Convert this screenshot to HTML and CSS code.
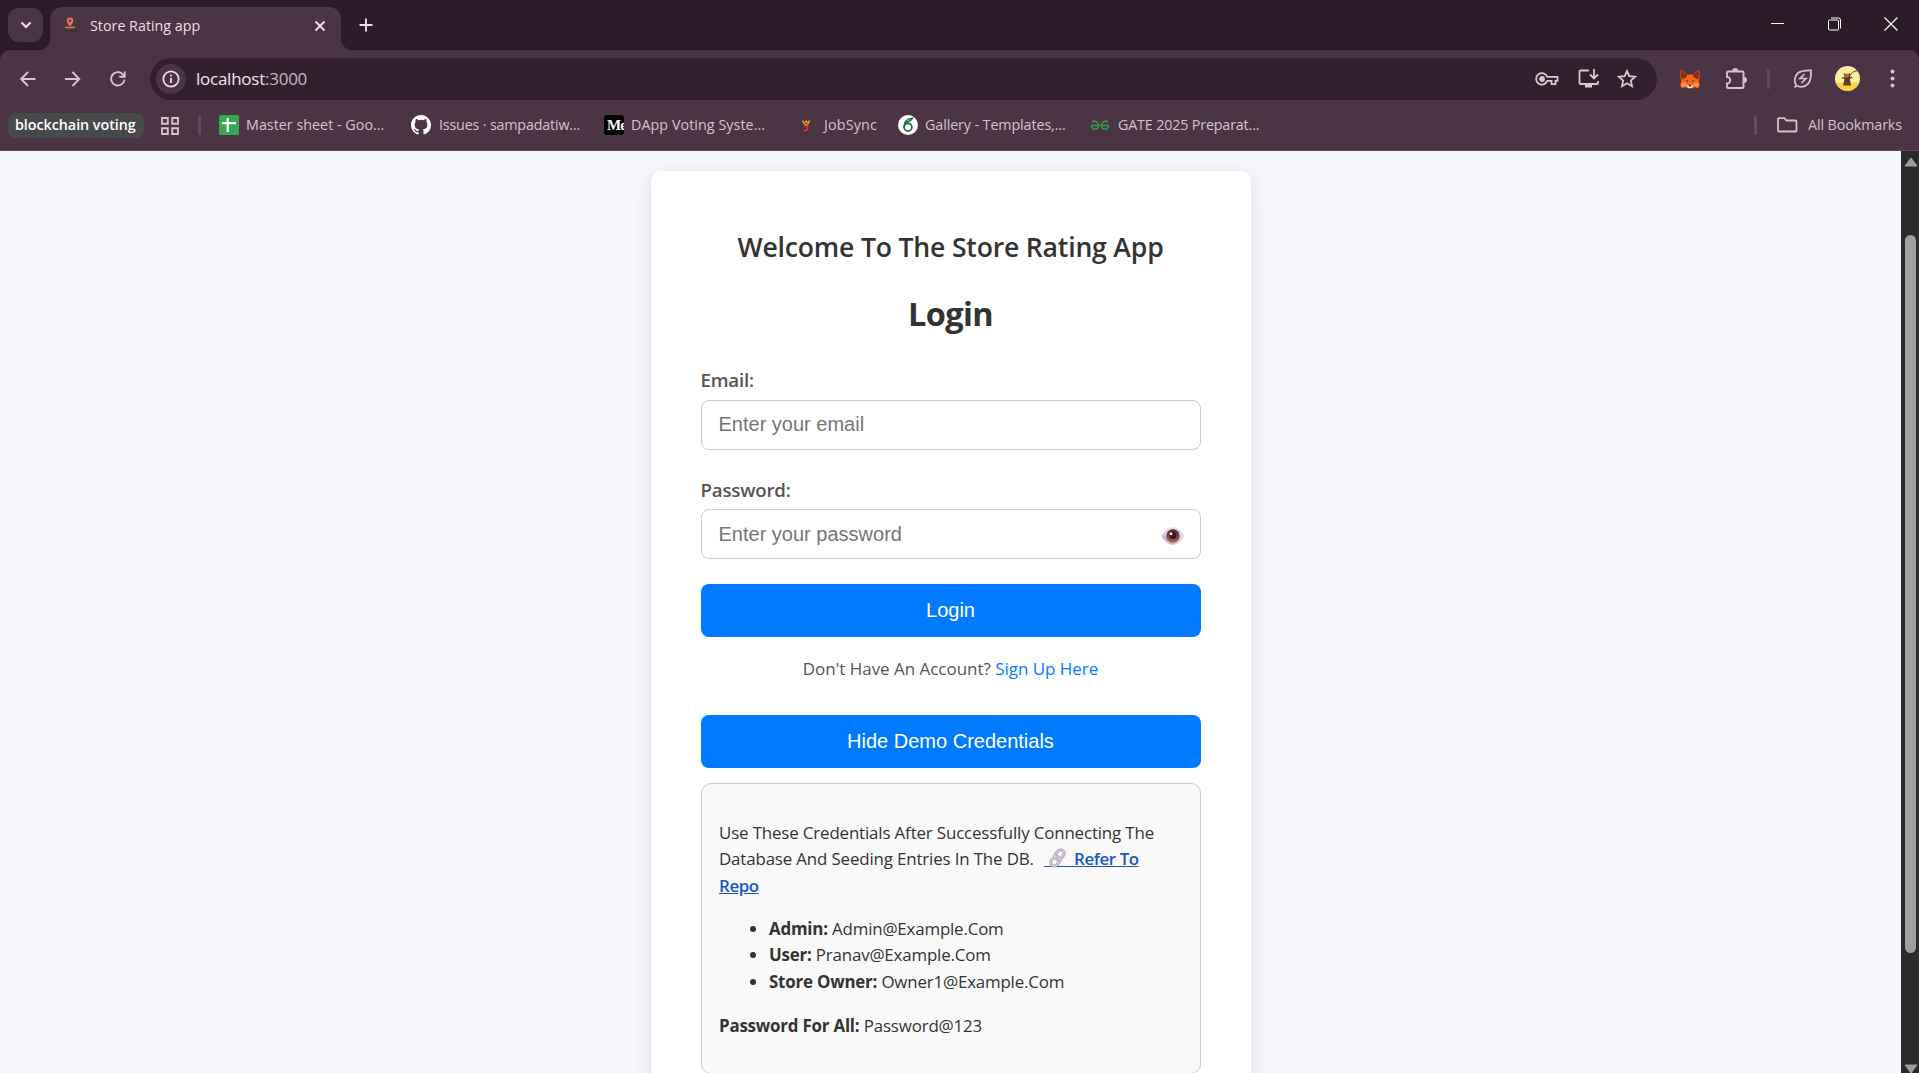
FILE: index.html
```html
<!DOCTYPE html>
<html lang="en">
<head>
<meta charset="utf-8">
<title>Store Rating app</title>
<link rel="stylesheet" href="styles.css">
</head>
<body>
<div class="browser">
  <div class="tabstrip">
    <div class="tab-search"><svg width="12" height="8" viewBox="0 0 12 8"><path d="M1.500 1.500 6 6l4.500-4.500" fill="none" stroke="currentColor" stroke-width="2.200"/></svg></div>
    <div class="tab">
      <svg class="favicon" width="16" height="16" viewBox="0 0 16 16"><path d="M8 9.500C6 7 4.800 5.500 4.800 3.700a3.200 3.200 0 0 1 6.400 0C11.200 5.500 10 7 8 9.500z" fill="#f0705c"/><circle cx="8" cy="3.700" r="1.300" fill="#4b3545"/><path d="M3 10.500h10" stroke="#c98a2c" stroke-width="1.600"/><path d="M1 13.800h14" stroke="#3a3138" stroke-width="2"/></svg>
      <span class="tab-title">Store Rating app</span>
      <svg class="tab-close" width="12" height="12" viewBox="0 0 12 12"><path d="m1.500 1.500 9 9m0-9-9 9" stroke="currentColor" stroke-width="1.900"/></svg>
    </div>
    <svg class="new-tab" width="14" height="14" viewBox="0 0 14 14"><path d="M7 .5v13M.5 7h13" stroke="currentColor" stroke-width="1.900"/></svg>
    <div class="window-buttons">
      <svg width="14" height="14" viewBox="0 0 14 14"><path d="M0 6.500h13" stroke="currentColor"/></svg>
      <svg width="14" height="14" viewBox="0 0 14 14" fill="none" stroke="currentColor"><rect x=".5" y="3" width="10" height="10" rx="1"/><path d="M3 1h7.500a2 2 0 0 1 2 2v8.500"/></svg>
      <svg width="14" height="14" viewBox="0 0 14 14"><path d="m.5.5 13 13m0-13-13 13" stroke="currentColor" stroke-width="1.200"/></svg>
    </div>
  </div>

  <div class="chrome">
    <div class="toolbar">
      <svg class="nav" width="16" height="16" viewBox="0 0 16 16"><path d="M15.500 8H1.800M8 1 1.200 8 8 15" fill="none" stroke="currentColor" stroke-width="1.900"/></svg>
      <svg class="nav" width="16" height="16" viewBox="0 0 16 16"><path d="M0 8h13.700M7.500 1l6.800 7-6.800 7" fill="none" stroke="currentColor" stroke-width="1.900"/></svg>
      <svg class="nav" width="16" height="16" viewBox="0 0 16 16"><path d="M14.500 8.500A6.700 6.700 0 1 1 13 3.500l1.500 2M14.700.5v5.300H9.200" fill="none" stroke="currentColor" stroke-width="1.900"/></svg>
      <div class="omnibox">
        <div class="site-info"><svg width="18" height="18" viewBox="0 0 18 18"><circle cx="9" cy="9" r="7.700" fill="none" stroke="currentColor" stroke-width="1.700"/><path d="M9 8v5M9 4.700v1.900" stroke="currentColor" stroke-width="1.800"/></svg></div>
        <span class="url">localhost<i>:3000</i></span>
        <div class="omnibox-actions">
          <svg width="24" height="14" viewBox="0 0 24 14" fill="none" stroke="currentColor" stroke-width="1.800"><path d="M12.200 4.900H22.500v4H20.500v3.200h-4V8.900h-4.300a5.700 5.700 0 1 1 0-4z"/><circle cx="7" cy="7" r="2" fill="currentColor"/></svg>
          <svg width="21" height="19" viewBox="0 0 21 19" fill="none" stroke="currentColor" stroke-width="1.800"><path d="M11 1.500H2.500a1 1 0 0 0-1 1v11.500a1 1 0 0 0 1 1h16.500a1 1 0 0 0 1-1V12M16 0v9M12 5.500l4 4 4-4"/><path d="M7 17h7" stroke-width="3"/></svg>
          <svg width="20" height="19" viewBox="0 0 20 19" fill="none" stroke="currentColor" stroke-width="1.700"><path d="m10 1.800 2.300 5.300 5.900.5-4.400 3.900 1.300 5.700-5.100-3-5.100 3 1.300-5.700-4.400-3.900 5.900-.5z"/></svg>
        </div>
      </div>
      <div class="extensions">
        <svg width="20" height="20" viewBox="0 0 20 20"><path d="M.8.800 7.500 5.500h5L19.200.8l.5 6.200-1 5.200.8 4.300-1.300 2.500-3.900-.8-2 1.300H7.700l-2-1.300-3.900.8-1.300-2.500.8-4.300-1-5.200z" fill="#f5651d"/><path d="M1.200 1.500 7.300 5.800 6 8.300 2 10.500.9 7zM18.800 1.500l-6.100 4.300L14 8.300l4 2.200L19.100 7z" fill="#8a2b12"/><path d="m5.500 11 2.800.8-.6 1.300zM14.500 11l-2.800.8.6 1.300z" fill="#30394a"/><path d="M1 13.500 6 14l.5 3-4.500 1-1.300-1.500zM19 13.500l-5 .5-.5 3 4.500 1 1.300-1.500z" fill="#ff8b42"/><path d="M6.500 16h7L12 19H8z" fill="#f3e9e2"/><path d="M8.500 16h3l-.5 1.500H9z" fill="#30394a"/></svg>
        <svg width="22" height="22" viewBox="0 0 22 22"><path d="M3 3.500h14.500a1 1 0 0 1 1 1v14.500a1 1 0 0 1-1 1H3a1 1 0 0 1-1-1v-3.500a3.200 3.200 0 0 0 0-6.500V4.500a1 1 0 0 1 1-1z" fill="none" stroke="currentColor" stroke-width="1.900"/><path d="M7.300 3a3 3 0 0 1 6 0zM19 9a3 3 0 0 1 0 6z" fill="currentColor"/></svg>
        <i class="divider"></i>
        <svg width="20" height="20" viewBox="0 0 20 20" fill="none" stroke="currentColor" stroke-width="1.800"><path d="M3.500 16.500C.5 13 1.500 7 5 4c3.500-2.500 8-2.700 13-2.600.2 5 0 10-3 13.500-3 3.200-8 3.800-11.500 1.600zm0 0-2 2"/><path d="M11.500 5 7 9.500h6L8.500 14" stroke-width="1.700"/></svg>
        <svg width="25" height="25" viewBox="0 0 25 25"><defs><clipPath id="disc"><circle cx="12.500" cy="12.500" r="12.500"/></clipPath></defs><g clip-path="url(#disc)"><path d="M0 0h25v25H0z" fill="#fbeea0"/><path d="M0 16.500h25V25H0z" fill="#fcd23a"/><path d="M8 19.500 9.500 13 6.500 12.200l.3-1 3 .3L8.500 7l2 1h3l1.700-1.200-.7 4.200 2.500-.2.300 1-2.500 1.200 1.200 6.500z" fill="#6c371f"/><path d="M14.500 10.500C17 5.500 20 5 24 4.500" fill="none" stroke="#6c371f"/><circle cx="12" cy="9.500" r="1.900" fill="#a5744d"/></g></svg>
        <svg width="5" height="20" viewBox="0 0 5 20" fill="currentColor"><circle cx="2.500" cy="2.500" r="2"/><circle cx="2.500" cy="9.500" r="2"/><circle cx="2.500" cy="16.500" r="2"/></svg>
      </div>
    </div>

    <div class="bookmarks">
      <span class="group">blockchain voting</span>
      <svg class="apps" width="18" height="18" viewBox="0 0 18 18" fill="none" stroke="currentColor" stroke-width="1.900"><path d="M1 1h5.800v5.800H1zM11.200 1H17v5.800h-5.800zM1 11.200h5.800V17H1zM11.200 11.200H17V17h-5.800z"/></svg>
      <i class="divider"></i>
      <div class="bookmark sheet"><svg width="20" height="20" viewBox="0 0 20 20"><rect width="20" height="20" rx="1.500" fill="#34a853"/><path d="M8.700 3v14M3 8.200h14" stroke="#fff" stroke-width="2.200"/></svg><span>Master sheet - Goo...</span></div>
      <div class="bookmark issues"><svg width="20" height="20" viewBox="0 0 16 16"><path fill="#fff" d="M8 0C3.580 0 0 3.580 0 8c0 3.540 2.290 6.530 5.470 7.590.4.070.55-.17.55-.38 0-.19-.01-.82-.01-1.490-2.010.37-2.530-.49-2.690-.94-.09-.23-.48-.94-.82-1.130-.28-.15-.68-.52-.01-.53.63-.01 1.080.58 1.230.82.72 1.210 1.870.87 2.330.66.07-.52.28-.87.51-1.070-1.780-.2-3.640-.89-3.640-3.950 0-.87.31-1.590.82-2.150-.08-.2-.36-1.020.08-2.120 0 0 .67-.21 2.200.82a7.600 7.600 0 0 1 4 0c1.530-1.040 2.200-.82 2.200-.82.44 1.100.16 1.920.08 2.120.51.56.82 1.270.82 2.150 0 3.070-1.870 3.750-3.650 3.950.29.25.54.73.54 1.480 0 1.070-.01 1.930-.01 2.200 0 .21.15.46.55.38A8.010 8.010 0 0 0 16 8c0-4.420-3.580-8-8-8z"/></svg><span>Issues · sampadatiw...</span></div>
      <div class="bookmark dapp"><b class="medium">Me</b><span>DApp Voting Syste...</span></div>
      <div class="bookmark jobsync"><svg width="20" height="20" viewBox="0 0 20 20" fill="none"><path d="m6.500 5.500 2.700 4.300h2l2.500-4.300" stroke="#f59a1c" stroke-width="1.500"/><circle cx="10.200" cy="6.800" r="1.200" fill="#fbb52a"/><path d="M11.500 9.500v4q0 2-2.300 2H7.300M8 11H11" stroke="#e8322d" stroke-width="1.600"/></svg><span>JobSync</span></div>
      <div class="bookmark gallery"><svg width="20" height="20" viewBox="0 0 20 20" fill="none"><circle cx="10" cy="10" r="10" fill="#fff"/><circle cx="10" cy="12.200" r="3.900" stroke="#17733c" stroke-width="1.700"/><path d="M6.200 11.500C6.500 6.500 9 3.500 14.500 3.300 13 5.800 11 6.300 8 7.800" stroke="#17733c" stroke-width="1.500"/></svg><span>Gallery - Templates,...</span></div>
      <div class="bookmark gate"><svg width="20" height="20" viewBox="0 0 20 20" fill="none" stroke="#2f9a4a" stroke-width="1.600"><path d="M.8 10.500h18.400M2 7.200C4 5.300 8.300 6 8.300 10.500c0 5-6.500 5-6.800.5M18 7.200c-2-1.900-6.300-1.200-6.300 3.300 0 5 6.500 5 6.800.5"/></svg><span>GATE 2025 Preparat...</span></div>
      <div class="all-bookmarks">
        <i class="divider"></i>
        <svg width="21" height="16" viewBox="0 0 21 16" fill="none" stroke="currentColor" stroke-width="1.800"><path d="M2 1.200h5.500l2 2.300h9a1 1 0 0 1 1 1v9a1 1 0 0 1-1 1H2a1 1 0 0 1-1-1V2.200a1 1 0 0 1 1-1z"/></svg>
        <span>All Bookmarks</span>
      </div>
    </div>
  </div>

  <div class="viewport">
    <main class="page">
      <div class="card">
        <h2>Welcome To The Store Rating App</h2>
        <h1>Login</h1>
        <form>
          <label for="email">Email:</label>
          <input id="email" type="text" placeholder="Enter your email">
          <label class="second" for="password">Password:</label>
          <div class="password">
            <input id="password" type="password" placeholder="Enter your password">
            <svg class="eye" width="24" height="20" viewBox="0 0 24 20"><defs><linearGradient id="white" x1="0" y1="1" x2="1" y2="0"><stop offset="0" stop-color="#a78dc8"/><stop offset=".4" stop-color="#d6d0e0"/><stop offset="1" stop-color="#e2e2e5"/></linearGradient><linearGradient id="iris" x1="0" y1="0" x2="0" y2="1"><stop offset="0" stop-color="#5c1c35"/><stop offset="1" stop-color="#b0644a"/></linearGradient></defs><path d="M.8 10C4 4 8 1.300 12 1.300S20 4 23.200 10C20 16 16 18.700 12 18.700S4 16 .8 10z" fill="url(#white)"/><circle cx="12" cy="10" r="6.700" fill="url(#iris)"/><circle cx="12" cy="9.600" r="3.500" fill="#321c2b"/><circle cx="10" cy="7.800" r="1.400" fill="#fff"/></svg>
          </div>
          <button type="button">Login</button>
        </form>
        <p class="signup">Don't Have An Account? <a>Sign Up Here</a></p>
        <button type="button">Hide Demo Credentials</button>
        <section class="demo">
          <p>Use These Credentials After Successfully Connecting The Database And Seeding Entries In The DB. <a class="repo"><svg width="22" height="21" viewBox="0 0 22 21" fill="none"><path d="M0 18.500h22" stroke="#1a56c4"/><g transform="translate(3.500 -.5)"><g stroke="#a99bb5" stroke-width="3"><rect x="8.500" y="2" width="7" height="10.500" rx="3.500" transform="rotate(42 12 7.250)"/><rect x="4.200" y="8.500" width="7" height="10.500" rx="3.500" transform="rotate(42 7.700 13.750)"/></g><g stroke="#d5cadb" stroke-width="1.600"><rect x="8.500" y="2" width="7" height="10.500" rx="3.500" transform="rotate(42 12 7.250)"/><rect x="4.200" y="8.500" width="7" height="10.500" rx="3.500" transform="rotate(42 7.700 13.750)"/></g></g></svg>&nbsp; Refer To<br>Repo</a></p>
          <ul>
            <li><strong>Admin:</strong> Admin@Example.Com</li>
            <li><strong>User:</strong> Pranav@Example.Com</li>
            <li><strong>Store Owner:</strong> Owner1@Example.Com</li>
          </ul>
          <p><strong>Password For All:</strong> Password@123</p>
        </section>
      </div>
    </main>
    <div class="scrollbar">
      <svg width="14" height="10" viewBox="0 0 14 10"><path d="M7 1 13 9H1z" fill="#9f9f9f" stroke="#9f9f9f" stroke-linejoin="round"/></svg>
      <div class="thumb"></div>
      <svg class="down" width="14" height="10" viewBox="0 0 14 10"><path d="M7 9 1 1h12z" fill="#9f9f9f" stroke="#9f9f9f" stroke-linejoin="round"/></svg>
    </div>
  </div>
</div>
</body>
</html>
```
FILE: styles.css
```css
* { box-sizing: border-box; }
body { margin: 0; overflow: hidden; font-family: "Open Sans", "Noto Sans", sans-serif; }
svg { display: block; flex: none; }
i { font-style: normal; }
.browser { height: 1073px; display: flex; flex-direction: column; background: #2c1b29; }

/* Tab strip */
.tabstrip { height: 50px; flex: none; display: flex; padding-left: 8px; color: #f0dcea; }
.tab-search { width: 35px; height: 34px; margin-top: 8px; border-radius: 11px; background: #4b3545; display: flex; align-items: center; justify-content: center; }
.tab { position: relative; width: 291px; height: 43px; margin: 7px 0 0 7px; padding: 0 15px 6px 12px; border-radius: 12px 12px 0 0; background: #4b3545; display: flex; align-items: center; }
.tab::before, .tab::after { content: ""; position: absolute; bottom: 0; width: 12px; height: 12px; }
.tab::before { left: -12px; background: radial-gradient(circle at 0 0, transparent 12px, #4b3545 12.500px); }
.tab::after { right: -12px; background: radial-gradient(circle at 100% 0, transparent 12px, #4b3545 12.500px); }
.favicon { margin-bottom: 1px; }
.tab-title { margin-left: 12px; font-size: 14.300px; }
.tab-close { margin-left: auto; }
.new-tab { margin: 18px 0 0 18px; }
.window-buttons { margin: 17px 21px 0 auto; display: flex; gap: 42.500px; color: #fff; }

/* Toolbar */
.chrome { height: 101px; flex: none; border-radius: 10px 10px 0 0; background: #4b3545; border-bottom: 1px solid #5c4956; color: #dcbfd3; }
.toolbar { height: 57px; display: flex; align-items: center; padding-left: 20px; }
.nav { margin-right: 29px; }
.omnibox { width: 1507px; height: 42px; margin-left: -5px; padding: 0 20px 0 6px; border-radius: 21px; background: #33202e; display: flex; align-items: center; flex: none; }
.site-info { width: 30px; height: 30px; border-radius: 50%; background: #4b3545; color: #f0dcea; display: flex; align-items: center; justify-content: center; }
.url { margin-left: 10px; font-size: 17px; letter-spacing: -.25px; color: #f3e5ee; }
.url i { color: #cbb5c3; }
.omnibox-actions { margin-left: auto; display: flex; align-items: center; gap: 18.500px; color: #dac9d4; }
.extensions { display: flex; align-items: center; margin-left: 23px; }
.extensions > * { margin-right: 25px; }
.extensions > :nth-child(2) { margin-right: 20px; }
.extensions > :nth-child(4) { margin-right: 22px; }
.extensions > :nth-child(5) { margin-right: 30px; }
.extensions > :last-child { margin-right: 0; }
.divider { width: 3px; height: 20px; border-radius: 2px; background: #624c5c; flex: none; }
.extensions .divider { margin-right: 23px; }

/* Bookmarks bar */
.bookmarks { height: 36px; display: flex; align-items: center; padding-left: 8px; font-size: 14.300px; color: #d5c3ce; white-space: nowrap; }
.bookmark span, .all-bookmarks span { padding-bottom: 2px; }
.group { width: 136px; height: 25px; line-height: 24px; padding-left: 7px; border-radius: 8px; background: #48494a; color: #fff; font-weight: 600; letter-spacing: -.03px; }
.apps { margin: 1px 19px 0 17px; }
.bookmark { display: flex; align-items: center; gap: 8px; margin-right: 27px; flex: none; }
.sheet { width: 165px; margin-left: 18px; gap: 7px; letter-spacing: .02px; }
.issues { width: 169px; letter-spacing: -.17px; margin-right: 24px; }
.dapp { width: 162px; gap: 7px; margin-right: 30px; letter-spacing: .06px; }
.jobsync { width: 82px; margin-right: 20px; letter-spacing: .16px; }
.gallery { width: 168px; gap: 7px; margin-right: 24px; letter-spacing: -.1px; }
.gate { width: 170px; gap: 8px; letter-spacing: -.16px; }
.medium { width: 20px; height: 20px; overflow: hidden; border-radius: 3px; padding-left: 3px; background: #000; color: #fff; font: 700 15px/20px "Liberation Serif", serif; letter-spacing: -1px; }
.all-bookmarks { margin: 0 17px 0 auto; display: flex; align-items: center; letter-spacing: -.1px; }
.all-bookmarks svg { margin: 0 10px 0 20px; }

/* Page */
.viewport { flex: 1; min-height: 0; display: flex; overflow: hidden; }
.page { flex: 1; padding-top: 20px; background: #f4f6fb; overflow: hidden; }
.card { width: 600px; height: 980px; margin: 0 auto; padding: 50px; border-radius: 10px; background: #fff; box-shadow: 0 5px 20px rgba(0, 0, 0, .1); color: #333; }
h1, h2, p, ul { margin: 0; }
h2 { font-size: 26.600px; font-weight: 600; line-height: 52px; letter-spacing: -.19px; text-align: center; }
h1 { margin-bottom: 5px; font-size: 32.500px; line-height: 82px; letter-spacing: -.6px; text-align: center; }
form { display: flex; flex-direction: column; }
label { height: 40px; line-height: 39px; font-size: 18.700px; font-weight: 600; letter-spacing: -.2px; color: #555; }
.second { height: 39px; line-height: 40px; margin-top: 20px; }
input { width: 100%; height: 50px; padding: 0 17px 1px; border: 1px solid #ccc; border-radius: 8px; background: #fff; font: 20px "Liberation Sans", Arial, sans-serif; }
input::placeholder { color: #757575; }
.password { position: relative; margin-bottom: 25px; }
.password input { padding-bottom: 0; }
.eye { position: absolute; right: 16px; top: 17px; }
button { display: block; width: 100%; height: 53px; padding: 0; border: 0; border-radius: 8px; background: #007bff; color: #fff; font: 20px "Liberation Sans", Arial, sans-serif; }
.signup { height: 78px; padding-top: 19px; font-size: 17px; line-height: 26px; letter-spacing: -.03px; text-align: center; color: #555; }
.signup a { color: #007bff; }
.demo { margin-top: 15px; height: 291px; padding: 36px 17.500px 0; border: 1px solid #ccc; border-radius: 10px; background: #f9f9f9; font-size: 16.900px; line-height: 26.400px; letter-spacing: -.15px; }
.demo ul { margin: 16.600px 0 17.600px; padding-left: 50px; }
.repo { margin-left: 6px; color: #1a56c4; font-weight: 600; letter-spacing: -.4px; text-decoration: underline; }
.repo svg { display: inline-block; vertical-align: -4px; }
.demo li { letter-spacing: -.18px; }
strong { letter-spacing: -.2px; }

/* Scrollbar */
.scrollbar { width: 18px; background: #2b2b2b; display: flex; flex-direction: column; align-items: center; padding: 6px 0 0 1px; }
.thumb { width: 11px; height: 718px; margin-top: 68px; border-radius: 6px; background: #9f9f9f; flex: none; }
.down { margin-top: 111px; }
```
